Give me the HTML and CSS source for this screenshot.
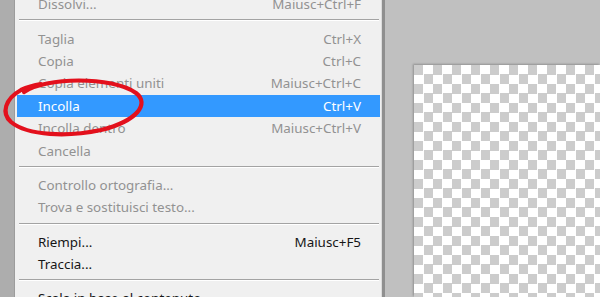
FILE: index.html
```html
<!DOCTYPE html>
<html lang="it">
<head>
<meta charset="utf-8">
<title>Menu Modifica</title>
<link rel="stylesheet" href="styles.css">
</head>
<body>
<div class="app">
  <div class="rail"></div>
  <div class="menu">
    <ul class="menu-list">
      <li class="item"><span>Dissolvi...</span><span>Maiusc+Ctrl+F</span></li>
      <li class="sep"></li>
      <li class="item"><span>Taglia</span><span>Ctrl+X</span></li>
      <li class="item"><span>Copia</span><span>Ctrl+C</span></li>
      <li class="item"><span>Copia elementi uniti</span><span>Maiusc+Ctrl+C</span></li>
      <li class="item active"><span>Incolla</span><span>Ctrl+V</span></li>
      <li class="item"><span>Incolla dentro</span><span>Maiusc+Ctrl+V</span></li>
      <li class="item"><span>Cancella</span><span></span></li>
      <li class="sep"></li>
      <li class="item"><span>Controllo ortografia...</span><span></span></li>
      <li class="item"><span>Trova e sostituisci testo...</span><span></span></li>
      <li class="sep"></li>
      <li class="item enabled"><span>Riempi...</span><span>Maiusc+F5</span></li>
      <li class="item enabled"><span>Traccia...</span><span></span></li>
      <li class="sep"></li>
      <li class="item enabled"><span>Scala in base al contenuto</span><span></span></li>
    </ul>
  </div>
  <div class="menu-edge"></div>
  <div class="workspace"><div class="canvas"></div></div>
</div>
<svg class="marker" width="160" height="150" viewBox="0 0 160 150">
  <path d="M 24 92 C 45 77, 112 76, 136 93 C 150 104, 137 121, 101 130 C 68 137, 28 136, 11 122 C 1 113, 5 99, 21 90 C 27 87, 34 85, 41 84" fill="none" stroke="#e3101c" stroke-width="4.2" stroke-linecap="round"/>
</svg>
</body>
</html>
```

FILE: styles.css
```css
html, body {
  margin: 0;
  padding: 0;
  width: 600px;
  height: 297px;
  overflow: hidden;
  background: #c0c0c0;
}
.app {
  display: flex;
  height: 297px;
  font-family: "Noto Sans", "Open Sans", sans-serif;
  font-size: 13.4px;
}
.rail {
  width: 14px;
  background: #adadad;
  border-right: 1px solid #9c9c9c;
}
.menu {
  width: 366px;
  background: #f0f0f0;
  overflow: hidden;
}
.menu-edge {
  width: 1px;
  background: #dcdcdc;
  border-right: 3px solid #8f8f8f;
}
.menu-list {
  list-style: none;
  margin: -7px 0 0 0;
  padding: 0;
}
.item {
  display: flex;
  justify-content: space-between;
  align-items: center;
  height: 22.4px;
  margin: 0 1px 0 2px;
  padding: 0 19px 0 21px;
  color: #929292;
  white-space: nowrap;
}
.item.enabled {
  color: #161616;
}
.item.active {
  background: #3399ff;
  color: #ffffff;
}
.sep {
  height: 0;
  margin: 4px 2px 6px 4px;
  border-top: 1px solid #a3a3a3;
  border-bottom: 1px solid #ffffff;
}
.workspace {
  flex: 1;
  display: flex;
  padding: 65px 0 0 29px;
}
.canvas {
  flex: 1;
  background-color: #ffffff;
  background-image: conic-gradient(#ffffff 25%, #cccccc 0 50%, #ffffff 0 75%, #cccccc 0);
  background-size: 19px 19px;
  box-shadow: -1px -1px 2px rgba(0, 0, 0, 0.25);
}
.marker {
  position: absolute;
  left: 0;
  top: 0;
}
```
